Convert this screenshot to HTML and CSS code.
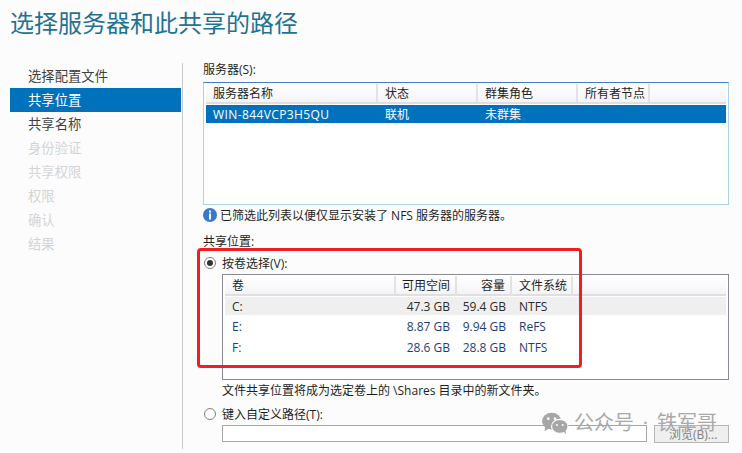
FILE: index.html
```html
<!DOCTYPE html>
<html lang="zh-CN">
<head>
<meta charset="utf-8">
<title>选择服务器和此共享的路径</title>
<link rel="stylesheet" href="styles.css">
</head>
<body>
<div class="page">
  <h1 class="title">选择服务器和此共享的路径</h1>
  <div class="wizard">
    <nav class="steps">
      <div class="step">选择配置文件</div>
      <div class="step active">共享位置</div>
      <div class="step">共享名称</div>
      <div class="step off">身份验证</div>
      <div class="step off">共享权限</div>
      <div class="step off">权限</div>
      <div class="step off">确认</div>
      <div class="step off">结果</div>
    </nav>
    <main class="content">
      <div class="label">服务器(S):</div>
      <div class="list servers">
        <div class="head srv-cols">
          <div class="hc">服务器名称</div>
          <div class="hc">状态</div>
          <div class="hc">群集角色</div>
          <div class="hc">所有者节点</div>
        </div>
        <div class="srv-row srv-cols">
          <div class="srv-name">WIN-844VCP3H5QU</div>
          <div>联机</div>
          <div>未群集</div>
          <div></div>
        </div>
      </div>
      <div class="info">
        <svg class="info-icon" width="14" height="14" viewBox="0 0 14 14"><circle cx="7" cy="7" r="7" fill="#3a78d0"/><rect x="6" y="2.5" width="2" height="2" fill="#fff"/><rect x="6" y="5.5" width="2" height="6" fill="#fff"/></svg>
        <span>已筛选此列表以便仅显示安装了 NFS 服务器的服务器。</span>
      </div>
      <div class="label loc">共享位置:</div>
      <div class="radio-line first"><span class="radio on"></span><span>按卷选择(V):</span></div>
      <div class="list volumes">
        <div class="head vol-cols">
          <div class="hc">卷</div>
          <div class="hc r">可用空间</div>
          <div class="hc r">容量</div>
          <div class="hc">文件系统</div>
        </div>
        <div class="vol-row sel"><div>C:</div><div class="r">47.3 GB</div><div class="r">59.4 GB</div><div>NTFS</div></div>
        <div class="vol-row"><div>E:</div><div class="r">8.87 GB</div><div class="r">9.94 GB</div><div>ReFS</div></div>
        <div class="vol-row"><div>F:</div><div class="r">28.6 GB</div><div class="r">28.8 GB</div><div>NTFS</div></div>
      </div>
      <div class="note">文件共享位置将成为选定卷上的 \Shares 目录中的新文件夹。</div>
      <div class="radio-line second"><span class="radio"></span><span>键入自定义路径(T):</span></div>
      <div class="path-line">
        <div class="path-input"></div>
        <div class="browse">浏览(B)...</div>
      </div>
    </main>
  </div>
  <div class="redbox"></div>
  <div class="mark">
    <svg width="28" height="23" viewBox="0 0 28 24"><ellipse cx="10.5" cy="9.5" rx="10" ry="8.8" fill="#a6a6a6"/><path d="M4 15l-1 5 5-3z" fill="#a6a6a6"/><ellipse cx="19" cy="15" rx="8.6" ry="7.3" fill="#a6a6a6" stroke="#fcfcfd" stroke-width="1.2"/><path d="M23 20l2.5 3.5-.5-5z" fill="#a6a6a6"/><circle cx="7" cy="7" r="1.4" fill="#fcfcfd"/><circle cx="14" cy="7" r="1.4" fill="#fcfcfd"/><circle cx="16" cy="13.5" r="1.1" fill="#fcfcfd"/><circle cx="22" cy="13.5" r="1.1" fill="#fcfcfd"/></svg>
    <span class="mark-a">公众号</span>
    <span class="mark-dot">·</span>
    <span>铁军哥</span>
  </div>
</div>
</body>
</html>
```
FILE: styles.css
```css
* { box-sizing: border-box; }
html, body { margin: 0; padding: 0; }
body { background: #fcfcfd; font-family: "Open Sans", "Noto Sans CJK SC", sans-serif; font-size: 12px; color: #1e1e1e; }
.page { position: relative; width: 742px; height: 453px; overflow: hidden; }
.title { margin: 0; padding: 6px 0 0 10px; height: 63px; font-size: 24px; line-height: 34px; font-weight: 400; color: #1f7391; }
.wizard { display: flex; height: 386px; }
.steps { width: 171px; margin-left: 10px; padding-top: 1px; margin-right: 1px; }
.step { height: 24px; line-height: 24px; padding-left: 18px; font-size: 13.33px; color: #3f3f3f; }
.step.active { background: #0072bc; color: #fff; }
.step.off { color: #d4d4d4; }
.content { width: 547px; padding-left: 20px; border-left: 1px solid #c9c9c9; }
.label { height: 19px; line-height: 14px; font-size: 12px; }
.list { background: #fff; }
.servers { width: 526px; height: 123px; border: 1px solid #aed2e6; border-top-color: #3f85bb; padding: 1px 2px; }
.head { height: 20px; background: linear-gradient(#fff, #f4f4f7); border-bottom: 2px solid #dfdfe3; }
.hc { height: 100%; line-height: 20px; padding-left: 7px; border-right: 2px solid #e2e2e4; font-size: 12px; }
.srv-cols { display: grid; grid-template-columns: 172px 100px 100px 72px; }
.srv-row { height: 18px; margin-top: 1px; line-height: 20px; background: #0072bc; color: #fff; font-size: 12px; }
.srv-row > div { padding-left: 7px; }
.srv-row > .srv-name { letter-spacing: .4px; }
.info { display: flex; align-items: center; gap: 3px; height: 20px; font-size: 12px; }
.info-icon { flex: none; }
.loc { margin-top: 10px; height: 13px; line-height: 14px; }
.radio-line { display: flex; align-items: center; height: 14px; font-size: 12px; }
.radio-line.first { margin-top: 8px; }
.radio { flex: none; width: 12px; height: 12px; margin: 0 6px 0 1px; border: 1px solid #7f7f7f; border-radius: 50%; background: #fff; }
.radio.on::after { content: ""; display: block; width: 6px; height: 6px; margin: 2px; border-radius: 50%; background: #333; }
.volumes { width: 507px; height: 106px; margin: 4px 0 0 19px; border: 1px solid #8a8a94; padding: 1px 2px; }
.vol-cols { display: grid; grid-template-columns: 171px 61px 55px 61px; }
.hc.r { text-align: right; padding: 0 5px 0 0; }
.vol-row { display: grid; grid-template-columns: 170px 55px 56px 60px; height: 21px; line-height: 23px; color: #1d3d7c; font-size: 12px; }
.vol-row.sel { background: #efefef; height: 18px; line-height: 20px; margin-top: 1px; color: #2b2b2b; }
.vol-row > div { padding-left: 7px; }
.vol-row > div.r { text-align: right; padding: 0; }
.vol-row > div:last-child { padding-left: 13px; }
.note { margin: 1px 0 0 19px; height: 20px; line-height: 20px; font-size: 12px; }
.radio-line.second { margin-top: 6px; }
.path-line { display: flex; gap: 7px; margin: 4px 0 0 19px; }
.path-input { width: 425px; height: 17px; border: 1px solid #a6a6a6; background: #fff; }
.browse { width: 75px; height: 18px; border: 1px solid #b5b5b5; background: #efefef; color: #808080; padding-left: 14px; line-height: 18px; font-size: 12px; }
.redbox { position: absolute; left: 197px; top: 248px; width: 385px; height: 120px; border: 3px solid #f01f1f; border-radius: 4px; }
.mark { position: absolute; left: 541px; top: 410px; display: flex; align-items: center; color: #a9a9a9; font-size: 20px; line-height: 26px; white-space: nowrap; }
.mark svg { margin-right: 5px; }
.mark-dot { width: 23px; text-align: center; }
```
